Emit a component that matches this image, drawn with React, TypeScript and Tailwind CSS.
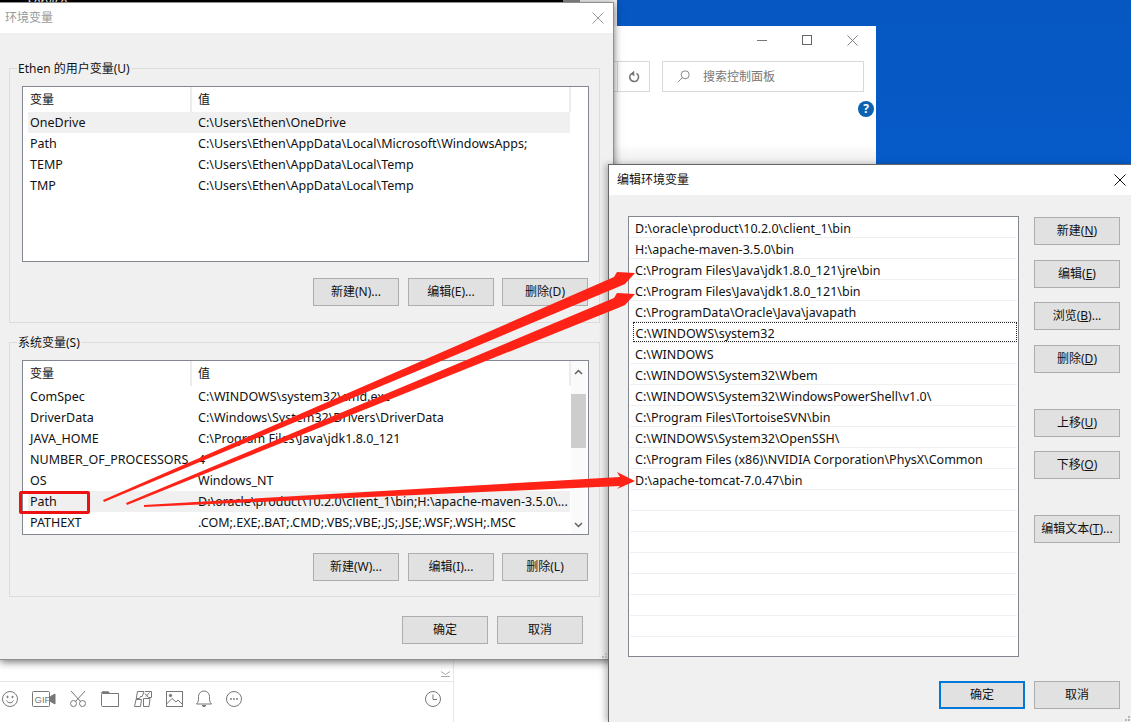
import React from "react";

const Btn = ({ children, className = "", primary = false }: { children: React.ReactNode; className?: string; primary?: boolean }) => (
  <div className={`h-[28px] w-[86px] shrink-0 flex items-center justify-center bg-[#e1e1e1] text-[12px] text-[#111] whitespace-nowrap ${primary ? "border-2 border-[#0078d7]" : "border border-[#adadad]"} ${className}`}>
    {children}
  </div>
);

const X = ({ color, size = 12 }: { color: string; size?: number }) => (
  <svg width={size} height={size} viewBox="0 0 12 12" fill="none" stroke={color} strokeWidth="1">
    <path d="M0.5 0.5 11.5 11.5M11.5 0.5 0.5 11.5" />
  </svg>
);

const userVars = [
  ["OneDrive", "C:\\Users\\Ethen\\OneDrive", true],
  ["Path", "C:\\Users\\Ethen\\AppData\\Local\\Microsoft\\WindowsApps;", false],
  ["TEMP", "C:\\Users\\Ethen\\AppData\\Local\\Temp", false],
  ["TMP", "C:\\Users\\Ethen\\AppData\\Local\\Temp", false],
] as const;

const sysVars = [
  ["ComSpec", "C:\\WINDOWS\\system32\\cmd.exe", false],
  ["DriverData", "C:\\Windows\\System32\\Drivers\\DriverData", false],
  ["JAVA_HOME", "C:\\Program Files\\Java\\jdk1.8.0_121", false],
  ["NUMBER_OF_PROCESSORS", "4", false],
  ["OS", "Windows_NT", false],
  ["Path", "D:\\oracle\\product\\10.2.0\\client_1\\bin;H:\\apache-maven-3.5.0\\...", true],
  ["PATHEXT", ".COM;.EXE;.BAT;.CMD;.VBS;.VBE;.JS;.JSE;.WSF;.WSH;.MSC", false],
] as const;

const paths = [
  "D:\\oracle\\product\\10.2.0\\client_1\\bin",
  "H:\\apache-maven-3.5.0\\bin",
  "C:\\Program Files\\Java\\jdk1.8.0_121\\jre\\bin",
  "C:\\Program Files\\Java\\jdk1.8.0_121\\bin",
  "C:\\ProgramData\\Oracle\\Java\\javapath",
  "C:\\WINDOWS\\system32",
  "C:\\WINDOWS",
  "C:\\WINDOWS\\System32\\Wbem",
  "C:\\WINDOWS\\System32\\WindowsPowerShell\\v1.0\\",
  "C:\\Program Files\\TortoiseSVN\\bin",
  "C:\\WINDOWS\\System32\\OpenSSH\\",
  "C:\\Program Files (x86)\\NVIDIA Corporation\\PhysX\\Common",
  "D:\\apache-tomcat-7.0.47\\bin",
  "", "", "", "", "", "", "", "",
];

const VarTable = ({ rows }: { rows: readonly (readonly [string, string, boolean])[] }) => (
  <div className="w-[548px] shrink-0 flex flex-col">
    <div className="h-[25px] flex text-[12px] text-[#111] shrink-0">
      <div className="w-[169px] pl-[7px] flex items-center border-r-2 border-[#ececec]">变量</div>
      <div className="w-[379px] pl-[6px] flex items-center border-r-2 border-[#ececec]">值</div>
    </div>
    <div className="flex flex-col">
      {rows.map(([n, v, sel]) => (
        <div key={n} className={`ml-[5px] h-[21px] w-[542px] shrink-0 flex items-center pt-[2px] text-[12.5px] text-[#111] whitespace-nowrap ${sel ? "bg-[#f0f0f0]" : ""}`}>
          <span className="w-[170px] pl-[2px] shrink-0">{n}</span>
          <span>{v}</span>
        </div>
      ))}
    </div>
  </div>
);

const Group = ({ label, top = "", children }: { label: string; top?: string; children: React.ReactNode }) => (
  <div className={`relative h-[255px] w-[591px] border border-[#dcdcdc] pl-[12px] pt-[17px] ${top}`}>
    <span className="absolute -top-[9px] left-[7px] bg-[#f0f0f0] px-[1px] text-[12px] leading-[17px] text-[#111]">{label}</span>
    {children}
  </div>
);

const Gray = "#777";

export default function App() {
  return (
    <div className="relative h-[722px] w-[1131px] overflow-hidden bg-gradient-to-b from-[#0657c2] to-[#0a68dc] font-['Noto_Sans','Noto_Sans_CJK_SC',sans-serif]">
      {/* top sliver of the window behind */}
      <div className="absolute left-0 top-0 flex h-[26px] w-[617px]">
        <div className="h-[3px] w-[563px] overflow-hidden bg-black pl-[28px] text-[12px] leading-[4px] text-white">service</div>
        <div className="h-[3px] w-[17px] bg-[#8a8a8a]" />
        <div className="h-[26px] w-[37px] bg-[#f0f0f0]" />
      </div>

      {/* Control panel window */}
      <div className="absolute left-[580px] top-[26px] flex h-[139px] w-[296px] flex-col bg-gradient-to-b from-white from-[85%] to-[#ececec]">
        <div className="flex h-[28px] shrink-0 justify-end">
          <div className="flex w-[46px] items-center justify-center">
            <div className="h-px w-[10px] bg-[#777]" />
          </div>
          <div className="flex w-[45px] items-center justify-center pr-[2px]">
            <div className="h-[10px] w-[10px] border border-[#666]" />
          </div>
          <div className="flex w-[46px] items-center justify-center pr-px">
            <X color="#777" size={11} />
          </div>
        </div>
        <div className="mt-[7px] flex h-[31px] shrink-0 justify-end pr-[12px]">
          <div className="h-full w-[29px] border border-[#d9d9d9]" />
          <div className="-ml-px flex h-full w-[33px] items-center justify-center border border-[#d9d9d9]">
            <svg width="12" height="12" viewBox="0 0 12 12" fill="none" stroke="#777" strokeWidth="1.6">
              <path d="M3.5 2.6A4.4 4.4 0 1 0 8.5 2.4" />
              <path d="M6.2 0.2 3 2.8 6.4 4.6" strokeWidth="1" fill="#777" />
            </svg>
          </div>
          <div className="ml-[12px] flex h-full w-[202px] items-center border border-[#d9d9d9] pl-[14px] text-[12px] text-[#777]">
            <svg width="13" height="13" viewBox="0 0 13 13" fill="none" stroke="#888" strokeWidth="1">
              <circle cx="8.2" cy="4.8" r="4" />
              <path d="M5.3 7.7 0.8 12.3" />
            </svg>
            <span className="ml-[13px]">搜索控制面板</span>
          </div>
        </div>
        <div className="mt-[9px] flex justify-end pr-[2px]">
          <div className="flex h-[16px] w-[16px] items-center justify-center rounded-full bg-[#0a62b0] text-[12px] font-bold leading-none text-white">?</div>
        </div>
      </div>

      {/* Chat window bottom */}
      <div className="absolute left-0 top-[660px] h-[62px] w-[608px] bg-white">
        <div className="h-full w-[454px] border-r border-[#e8e8e8]">
          <div className="flex h-[22px] items-end justify-end border-b border-[#e6e6e6] pb-[4px] pr-[3px]">
            <svg width="9" height="6" viewBox="0 0 9 6" fill="none" stroke="#aaa" strokeWidth="1">
              <path d="M0 0.5 4.5 3.5 9 0.5M0 5.5H9" />
            </svg>
          </div>
          <div className="mt-[8px] flex items-center">
            <svg className="ml-[2px]" width="16" height="16" viewBox="0 0 16 16" fill="none" stroke={Gray} strokeWidth="1">
              <circle cx="8" cy="8" r="7.5" /><circle cx="5.5" cy="6" r=".7" fill={Gray} /><circle cx="10.5" cy="6" r=".7" fill={Gray} />
              <path d="M4.5 9.5C6 12.5 10 12.5 11.5 9.5" />
            </svg>
            <svg className="ml-[14px]" width="24" height="16" viewBox="0 0 24 16" fill="none" stroke={Gray} strokeWidth="1">
              <rect x=".5" y=".5" width="17" height="15" rx="1" />
              <text x="2.6" y="11.6" fontSize="9.5" fill={Gray} stroke="none" fontFamily="Liberation Sans, sans-serif">GIF</text>
              <path d="M18.5 5.5 23 3V13L18.5 10.5Z" fill={Gray} />
            </svg>
            <svg className="ml-[13px]" width="18" height="16" viewBox="0 0 18 16" fill="none" stroke={Gray} strokeWidth="1">
              <path d="M2 0 11.5 10.5M16 0 6.5 10.5" />
              <circle cx="4.5" cy="12.5" r="3" /><circle cx="13.5" cy="12.5" r="3" />
            </svg>
            <svg className="ml-[14px]" width="18" height="16" viewBox="0 0 18 16" fill="none" stroke={Gray} strokeWidth="1">
              <path d="M1.5 2.5H17.5V15.5H1.5Q.5 15.5 .5 14.5V3.5Q.5 2.5 1.5 2.5Z" />
              <path d="M.8 2.5V1.5Q.8 .8 1.5 .8H7.5L8.5 2.5" fill={Gray} />
            </svg>
            <svg className="ml-[15px]" width="18" height="16" viewBox="0 0 18 16" fill="none" stroke={Gray} strokeWidth="1">
              <path d="M3.5 .5H10L8.2 5.5H6.5L5.5 7.5H2.2ZM2 8.5H7.5L6.5 15.5H.5ZM9.5 7.5H16L15 15.5H9.5Z" />
              <path d="M11 .5H17.5V6.5H14.5L11 2.5M12 5.5 15.5 1.5" />
            </svg>
            <svg className="ml-[14px]" width="17" height="16" viewBox="0 0 17 16" fill="none" stroke={Gray} strokeWidth="1">
              <rect x=".5" y=".5" width="16" height="15" />
              <circle cx="4.5" cy="4.5" r="1.2" fill={Gray} />
              <path d="M.5 13 6 7.5 10 11 12 9 16.5 13.5" />
            </svg>
            <svg className="ml-[13px]" width="16" height="17" viewBox="0 0 16 17" fill="none" stroke={Gray} strokeWidth="1">
              <path d="M.5 14H15.5C13.5 12 13.5 10.5 13.5 6.5A5.5 5.5 0 0 0 2.5 6.5C2.5 10.5 2.5 12 .5 14Z" />
              <path d="M6 15.5H10L8 16.8Z" fill={Gray} />
            </svg>
            <svg className="ml-[14px]" width="16" height="16" viewBox="0 0 16 16" fill="none" stroke={Gray} strokeWidth="1">
              <circle cx="8" cy="8" r="7.5" />
              <circle cx="5" cy="8" r=".9" fill={Gray} stroke="none" /><circle cx="8" cy="8" r=".9" fill={Gray} stroke="none" /><circle cx="11" cy="8" r=".9" fill={Gray} stroke="none" />
            </svg>
            <svg className="ml-[183px]" width="16" height="16" viewBox="0 0 16 16" fill="none" stroke={Gray} strokeWidth="1">
              <circle cx="8" cy="8" r="7.5" />
              <path d="M8 3.5V8.5H12" />
            </svg>
          </div>
        </div>
      </div>

      {/* Environment variables dialog */}
      <div className="absolute left-0 top-[2px] flex h-[658px] w-[614px] flex-col border-r border-t border-b border-[#8f8f8f] shadow-[0_2px_8px_rgba(0,0,0,0.55)]">
        <div className="flex h-[30px] shrink-0 items-center justify-between bg-white pl-[5px] pr-[9px] text-[12px] text-[#999]">
          <span>环境变量</span>
          <X color="#999" />
        </div>
        <div className="relative flex flex-1 flex-col bg-[#f0f0f0] pl-[9px]">
          <Group label="Ethen 的用户变量(U)" top="mt-[35px]">
            <div className="flex h-[176px] w-[567px] border border-[#828790] bg-white">
              <VarTable rows={userVars} />
            </div>
            <div className="mt-[16px] flex w-[566px] justify-end">
              <Btn>新建(N)...</Btn>
              <Btn className="ml-[9px]">编辑(E)...</Btn>
              <Btn className="ml-[8px]">删除(D)</Btn>
            </div>
          </Group>
          <Group label="系统变量(S)" top="mt-[19px]">
            <div className="flex h-[175px] w-[567px] overflow-hidden border border-[#828790] bg-white">
              <VarTable rows={sysVars} />
              <div className="flex w-[15px] shrink-0 flex-col items-center bg-[#fafafa]">
                <div className="flex h-[33px] w-full items-start justify-center pt-[8px]">
                  <svg width="9" height="6" viewBox="0 0 9 6" fill="none" stroke="#606060" strokeWidth="1.5"><path d="M1 5 4.5 1.5 8 5" /></svg>
                </div>
                <div className="h-[54px] w-full bg-[#cdcdcd]" />
                <div className="flex flex-1 w-full items-end justify-center pb-[6px]">
                  <svg width="9" height="6" viewBox="0 0 9 6" fill="none" stroke="#606060" strokeWidth="1.5"><path d="M1 1 4.5 4.5 8 1" /></svg>
                </div>
              </div>
            </div>
            <div className="mt-[18px] flex w-[566px] justify-end">
              <Btn>新建(W)...</Btn>
              <Btn className="ml-[9px]">编辑(I)...</Btn>
              <Btn className="ml-[8px]">删除(L)</Btn>
            </div>
          </Group>
          <div className="mt-[19px] flex w-[574px] justify-end">
            <Btn>确定</Btn>
            <Btn className="ml-[9px]">取消</Btn>
          </div>
        </div>
      </div>

      {/* Edit dialog */}
      <div className="absolute left-[608px] top-[164px] flex h-[558px] w-[523px] flex-col border-l border-t border-[#666] shadow-[-3px_0_6px_rgba(0,0,0,0.25)]">
        <div className="flex h-[30px] shrink-0 items-center justify-between bg-white pl-[8px] pr-[5px] text-[12px] text-[#111]">
          <span>编辑环境变量</span>
          <X color="#111" />
        </div>
        <div className="flex flex-1 flex-col bg-[#f0f0f0] pl-[19px] pt-[21px]">
          <div className="flex">
            <div className="flex h-[441px] w-[391px] shrink-0 flex-col overflow-hidden border border-[#828790] bg-white px-px">
              {paths.map((p, i) => (
                <div key={i} className="flex h-[21px] shrink-0 items-center border-b border-[#f0f0f0] pl-[5px] pt-[5px] text-[12.5px] text-[#111] whitespace-nowrap">
                  {i === 5 ? (
                    <div className="-ml-[2px] -mt-[5px] flex h-[20px] flex-1 items-center border border-dotted border-[#222] pl-[1.5px] pt-[5px]">{p}</div>
                  ) : p}
                </div>
              ))}
            </div>
            <div className="ml-[15px] flex flex-col pt-px">
              <Btn><span>新建(<u>N</u>)</span></Btn>
              <Btn className="mt-[15px]"><span>编辑(<u>E</u>)</span></Btn>
              <Btn className="mt-[14px]"><span>浏览(<u>B</u>)...</span></Btn>
              <Btn className="mt-[15px]"><span>删除(<u>D</u>)</span></Btn>
              <Btn className="mt-[36px]"><span>上移(<u>U</u>)</span></Btn>
              <Btn className="mt-[14px]"><span>下移(<u>O</u>)</span></Btn>
              <Btn className="mt-[36px]"><span>编辑文本(<u>T</u>)...</span></Btn>
            </div>
          </div>
          <div className="mt-[24px] flex w-[492px] justify-end">
            <Btn primary>确定</Btn>
            <Btn className="ml-[9px]">取消</Btn>
          </div>
        </div>
      </div>

      {/* Annotations */}
      <div className="absolute left-[19px] top-[491px] h-[23px] w-[71px] rounded-[2px] border-[3px] border-[#ee1111]" />
      <svg className="pointer-events-none absolute left-0 top-0" width="1131" height="722" fill="#ff2216">
        <polygon points="103,500 614,277 617,272 635,273 625,284 618,287 104,502" />
        <polygon points="126,503 614,298 617,293 635,294 625,305 618,308 127,505" />
        <polygon points="144,505 620,477 617,472 635,481 617,489 620,486 144,507" />
        <g fill="#b5b5b5">
          <rect x="605" y="653" width="2" height="2" /><rect x="602" y="656" width="2" height="2" /><rect x="605" y="656" width="2" height="2" />
          <rect x="1128" y="716" width="2" height="2" /><rect x="1125" y="719" width="2" height="2" /><rect x="1128" y="719" width="2" height="2" />
        </g>
      </svg>
    </div>
  );
}
